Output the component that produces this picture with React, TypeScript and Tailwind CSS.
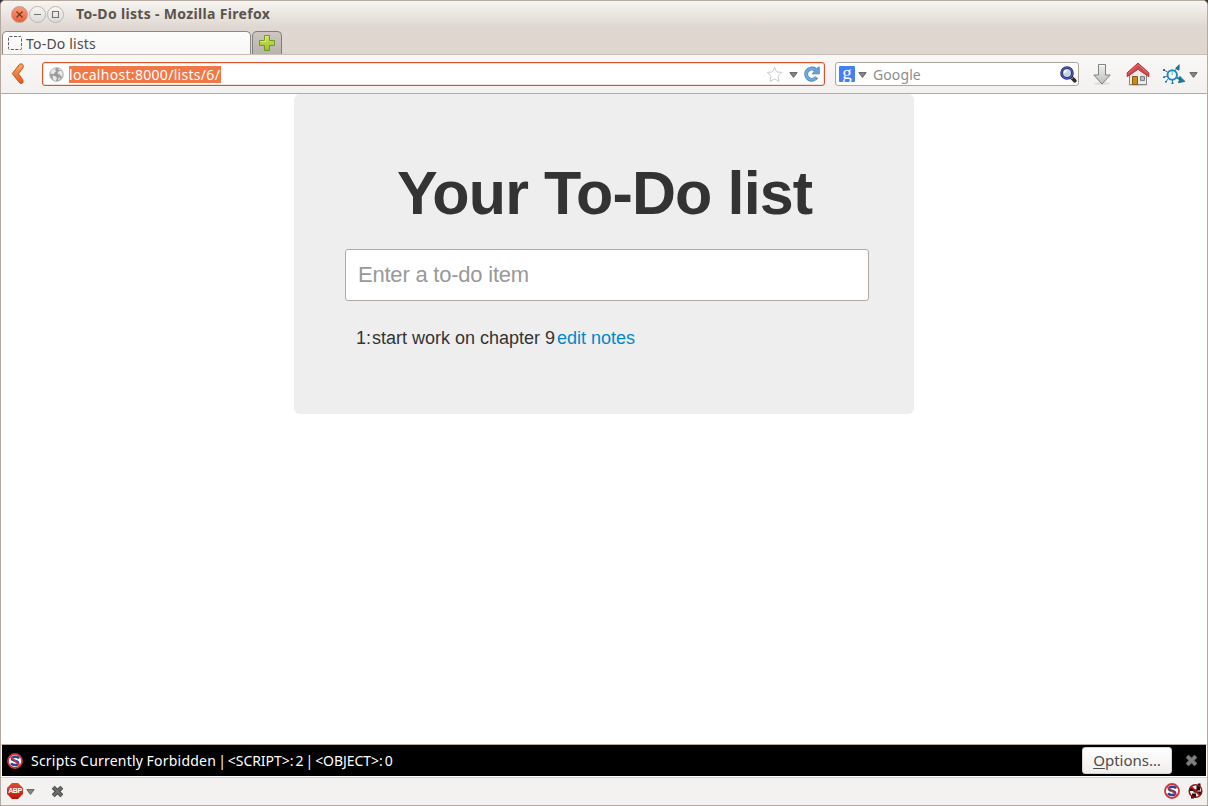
import React from 'react';

const Caret = ({ className = '' }: { className?: string }) => (
  <svg className={`shrink-0 ${className}`} width="9" height="6" viewBox="0 0 9 6">
    <path d="M.8.6h7.4L4.5 5.4z" fill="#858585" stroke="#5b5b5b" strokeWidth=".9" />
  </svg>
);

const WindowButton = ({ close = false, children }: { close?: boolean; children: React.ReactNode }) => (
  <button
    className={`flex size-[17px] items-center justify-center rounded-full border ${
      close ? 'border-[#c9968a] bg-linear-to-b from-[#f79a78] to-[#ea6036]' : 'border-[#bdb6ae] bg-linear-to-b from-[#f8f7f5] to-[#dedad6]'
    }`}
  >
    <svg width="15" height="15" viewBox="0 0 15 15" fill="none" stroke={close ? '#6b3526' : '#77716b'} strokeWidth="1.1">
      {children}
    </svg>
  </button>
);

const Plus = () => (
  <svg width="18" height="18" viewBox="0 0 18 18">
    <defs>
      <linearGradient id="plus" x2="0" y2="1">
        <stop stopColor="#d3e45c" />
        <stop offset="1" stopColor="#9cbf28" />
      </linearGradient>
    </defs>
    <path d="M6.5 1.5h5v5h5v5h-5v5h-5v-5h-5v-5h5z" fill="url(#plus)" stroke="#6c9b28" strokeLinejoin="round" />
    <path d="M7.5 2.5h3M2.5 7.5h5v-5" fill="none" stroke="#e5ef96" strokeWidth=".8" />
  </svg>
);

const Back = () => (
  <svg width="14" height="22" viewBox="0 0 14 22">
    <defs>
      <linearGradient id="back" x2="0" y2="1">
        <stop stopColor="#f5ad6a" />
        <stop offset="1" stopColor="#e5571b" />
      </linearGradient>
    </defs>
    <path d="M8.4 1.4 1.3 10.6l7.4 9.3c.6.8 2.800.8 3.200-.2.3-.9.3-2.300-.2-3L7.400 10.700l4.500-5.600c.5-.9.5-2.300.1-3.300-.6-1-2.900-1.300-3.600-.4z" fill="url(#back)" stroke="#c4501b" />
  </svg>
);

const Globe = () => (
  <svg className="shrink-0" width="15" height="15" viewBox="0 0 15 15">
    <circle cx="7.5" cy="7.5" r="6.800" fill="#9c9c9c" stroke="#b5b5b5" />
    <path d="M2 4.500C3 2.500 5 1.300 6.800 1.300L6 3.200 7.500 4 5.600 5.600 5 7.200 3 6.500 1.500 7.500zM8.800 5.200l2-1.700 1.600.3 1.300 2.400-.2 3.300-1.400.3-1-2.200-2-.4zM3.500 8.500l3 .8 1.500 1.800-1.300 2.900-2.600-1.400zM9.800 1.500l2 1.100-1.300.5-1.300-.6zM10 10.500l1.600.3-1.500 2.200-1.300-.2z" fill="#e9e9e9" />
  </svg>
);

const Star = () => (
  <svg className="shrink-0" width="17" height="17" viewBox="0 0 17 17">
    <path d="m8.500 1.300 2 4.600 5.300.500-3.800 3.800 1 5.300-4.500-2.600L4 15.500l1-5.300L1.200 6.400l5.300-.500z" fill="#fff" stroke="#cacaca" strokeLinejoin="round" />
  </svg>
);

const Reload = () => (
  <svg className="shrink-0" width="16" height="16" viewBox="0 0 16 16">
    <path d="M12.600 11.300A5.700 5.700 0 1 1 11.200 3.500" fill="none" stroke="#4b84bc" strokeWidth="3.800" />
    <path d="m15.200.8.1 7H8.200l2-2.200-1-1 3.200-2z" fill="#6ba3d6" stroke="#4b84bc" strokeWidth=".9" strokeLinejoin="round" />
    <path d="M12.300 11.100A5.500 5.500 0 1 1 11 3.700" fill="none" stroke="#72a9da" strokeWidth="2.400" />
  </svg>
);

const Magnifier = () => (
  <svg className="shrink-0" width="17" height="17" viewBox="0 0 17 17">
    <path d="m11.500 11.500 3.300 3.300" stroke="#2b2b30" strokeWidth="3.700" strokeLinecap="round" />
    <path d="m11 11 1.500 1.500" stroke="#d6b36a" strokeWidth="1.500" />
    <circle cx="7" cy="7" r="5.400" fill="#c9d3e8" stroke="#252d70" strokeWidth="2.800" />
    <circle cx="7" cy="7" r="5.400" fill="none" stroke="#5260b3" strokeWidth="1.100" />
    <path d="M4.500 7C4.500 5.500 5.500 4.500 7 4.500" fill="none" stroke="#fff" strokeWidth="1.700" />
  </svg>
);

const Download = () => (
  <svg width="20" height="24" viewBox="0 0 20 24">
    <defs>
      <linearGradient id="down" x2="0" y2="1">
        <stop stopColor="#eeefed" />
        <stop offset="1" stopColor="#bcbfba" />
      </linearGradient>
    </defs>
    <ellipse cx="10" cy="21.500" rx="8" ry="1.500" fill="#dfddda" />
    <path d="M6.500 2.500h7v10.500h4.700L10 22 1.800 13h4.700z" fill="url(#down)" stroke="#7f827e" strokeLinejoin="round" />
    <path d="M7.500 3.500h5" stroke="#fff" />
  </svg>
);

const Home = () => (
  <svg width="24" height="25" viewBox="0 0 24 25">
    <ellipse cx="12" cy="23" rx="10.500" ry="1.200" fill="#cfccc9" />
    <path d="M3.500 11 12 4l8.500 7v11.500h-17z" fill="#ecebe7" stroke="#868580" />
    <path d="M6.500 14.500h5v8h-5z" fill="#c88a1a" stroke="#8d5b08" />
    <path d="M14.500 14.500h4v4h-4z" fill="#a9bdcc" stroke="#7c8082" />
    <path d="m12 1.100 10.800 9.700v3.900L12 7.300 1.200 14.700v-3.900z" fill="#cf4a50" stroke="#b0343a" strokeLinejoin="round" />
    <path d="m2.300 11.300 9.700-8.700 9.700 8.700" fill="none" stroke="#df797c" strokeWidth=".9" />
  </svg>
);

const Virus = () => (
  <svg width="24" height="21" viewBox="0 0 24 21">
    <g fill="none" stroke="#3a7b95">
      <path d="m2 6 5 3M6 12l-4 1M7 14l-3 3.500M10.500 16v3M13 7l2.500-4" />
    </g>
    <path d="m14 13 4 2.500" stroke="#167ba5" strokeWidth="2" />
    <path d="m13.600 4.300 3.600-3.600-.2 5.500zM22.900 17.400l-6.500 1.300 1-2.500.3-4z" fill="#127ca9" stroke="#1d6280" strokeWidth=".8" />
    <path d="M1 5h2v2H1zM1 12.500h2V14H1zM3 17h2v1.500H3zM9.500 18.500h2V20h-2z" fill="#27708d" />
    <circle cx="10.200" cy="11" r="4.700" fill="#fff" stroke="#1c8dbb" strokeWidth="2" />
    <path d="M10.200 7v4" stroke="#4aa3c8" strokeWidth=".9" />
  </svg>
);

const NoScript = () => (
  <svg className="shrink-0" width="16" height="16" viewBox="0 0 16 16">
    <circle cx="8" cy="8" r="7" fill="#fff" stroke="#d4323a" strokeWidth="1.800" />
    <path d="M12 5.400C11 3.200 5.500 3.100 4.900 5.700 4.800 8.200 11.100 7.300 11.200 10c0 2.900-5.700 2.600-7.200.3" fill="none" stroke="#244a96" strokeWidth="2.500" />
    <path d="m3 3.200 10 9.600" stroke="#dd3038" strokeWidth="1.500" />
  </svg>
);

const Abp = () => (
  <div className="flex size-4 shrink-0 items-center justify-center bg-linear-to-b from-[#dc4b35] to-[#bd0f07] [clip-path:polygon(31%_0,69%_0,100%_31%,100%_69%,69%_100%,31%_100%,0_69%,0_31%)]">
    <span className="font-['Liberation_Sans_Narrow','Liberation_Sans',sans-serif] text-[7px] leading-[14px] font-bold tracking-[-0.4px] text-white">ABP</span>
  </div>
);

const Cross = ({ dark = false }: { dark?: boolean }) => (
  <svg className="shrink-0" width="13" height="13" viewBox="0 0 13 13">
    <path d="m2.200 2.200 8.600 8.600m0-8.600-8.600 8.600" stroke={dark ? '#464846' : '#6e6e6e'} strokeWidth="4.200" />
    <path d="m2.200 2.200 8.600 8.600m0-8.600-8.600 8.600" stroke={dark ? '#6c6e6b' : '#808080'} strokeWidth="2.200" />
  </svg>
);

const Blocked = () => (
  <svg width="15" height="16" viewBox="0 0 15 16">
    <path d="M2 5h3.500v3H2zM4 10.500h4V15H4zM8.500 3H12v4.500H8.500zM10 8.500h3v3h-3zM5.500 6.500h4v3h-4z" fill="#1d0b0b" />
    <path d="M10 .5h2.500V4H10zM3 12h3v3.500H3z" fill="#2b0b0c" />
    <circle cx="7.500" cy="8" r="6.300" fill="none" stroke="#8f1519" strokeWidth="1.500" />
    <path d="m3 3.500 9 9" stroke="#b5171d" strokeWidth="1.800" />
  </svg>
);

export default function App() {
  return (
    <div className="h-[806px] w-[1208px] overflow-hidden bg-[#3b3632] font-['Noto_Sans',sans-serif]">
      <div className="flex h-full flex-col overflow-hidden rounded-t-[5px] border border-[#b5aaa0] bg-white">
        <header className="flex h-[53px] shrink-0 flex-col bg-linear-to-b from-[#f7f5f2] via-[#dfd7d1] via-50% to-[#dfd6d0]">
          <div className="flex h-[30px] shrink-0 items-center pb-[4px] pl-[10px]">
            <div className="flex gap-px">
              <WindowButton close><path d="m4.500 4.500 6 6m0-6-6 6" /></WindowButton>
              <WindowButton><path d="M4 7.500h7" /></WindowButton>
              <WindowButton><path d="M4.500 4.500h6v6h-6z" /></WindowButton>
            </div>
            <div className="ml-[12px] pb-[2px] text-[14px] font-bold tracking-[0.33px] whitespace-nowrap text-[#5c544c]">To-Do lists - Mozilla Firefox</div>
          </div>
          <div className="flex h-[23px] shrink-0 gap-px pl-px">
            <div className="flex w-[249px] items-center rounded-t-[5px] border border-b-0 border-[#8e8883] bg-linear-to-b from-[#fcfcfb] to-[#f8f7f6] pl-[5px]">
              <svg width="14" height="14" viewBox="0 0 14 14"><rect x=".5" y=".5" width="13" height="13" rx="1" fill="none" stroke="#5d5d5d" strokeDasharray="3 1.500" /></svg>
              <span className="ml-[4px] pt-px text-[14px] tracking-[0.2px] text-[#4c4c4c]">To-Do lists</span>
            </div>
            <div className="flex w-[30px] items-center justify-center rounded-t-[5px] border border-b-0 border-[#827d79] bg-linear-to-b from-[#cdc6c1] to-[#b9b2ad]"><Plus /></div>
          </div>
        </header>

        <nav className="flex h-10 shrink-0 items-center border-y border-t-[#c8bfb7] border-b-[#b4aaa1] bg-linear-to-b from-[#f9f8f7] to-[#f3f1ef] pl-[10px]">
          <Back />
          <div className="ml-[17px] flex h-[24px] w-[783px] items-center rounded-[3px] border border-[#d4542c] bg-white pl-[6px] shadow-[inset_0_0_0_1px_#f5dfd7]">
            <Globe />
            <span className="ml-[5px] h-[17px] w-[152px] bg-[#f07746] text-[14px] leading-[17px] tracking-[0.3px] whitespace-nowrap text-white">localhost:8000/lists/6/</span>
            <div className="ml-auto flex items-center pr-[4px]"><Star /><Caret className="mr-[6px] ml-[6px] translate-y-px" /><Reload /></div>
          </div>
          <div className="ml-[10px] flex h-[24px] w-[244px] items-center rounded-[3px] border border-[#aea59d] bg-white pl-[3px]">
            <div className="flex size-4 items-center justify-center rounded-[1px] bg-[#4380f5] pb-[4px] font-['Liberation_Serif',serif] text-[19px] leading-none text-white">g</div>
            <Caret className="ml-[3px] translate-y-px" />
            <span className="ml-[6px] text-[14px] tracking-[0.1px] text-[#8d8d8d]">Google</span>
            <div className="mr-[1px] ml-auto"><Magnifier /></div>
          </div>
          <div className="ml-[13px]"><Download /></div>
          <div className="ml-[14px]"><Home /></div>
          <div className="ml-[12px]"><Virus /></div>
          <Caret className="ml-[3px] translate-y-px" />
        </nav>

        <main className="min-h-0 flex-1 bg-white font-['Liberation_Sans',sans-serif]">
          <section className="ml-[293px] h-[320px] w-[620px] rounded-[6px] bg-[#eee] pt-[69px] pl-[51px] text-[#333]">
            <h1 className="ml-[52px] h-[60px] text-[61px] leading-[60px] font-bold tracking-[-0.85px] whitespace-nowrap">Your To-Do list</h1>
            <input
              className="mt-[26px] block h-[52px] w-[524px] rounded-[3px] border border-[#b4a99f] bg-white px-[12px] text-[22px] tracking-[-0.22px] placeholder:text-[#999]"
              placeholder="Enter a to-do item"
            />
            <div className="mt-[27px] ml-[11px] flex text-[18px] leading-5 whitespace-nowrap text-[#333]">
              <span className="w-[16px]">1:</span>
              <span className="w-[185px]">start work on chapter 9</span>
              <a className="text-[#0088cc]">edit notes</a>
            </div>
          </section>
        </main>

        <div className="flex h-[33px] shrink-0 items-center border border-x-white border-t-[#b5aaa0] border-b-white bg-black pl-[5px] text-[14px] text-white">
          <NoScript />
          <span className="ml-[8px] whitespace-nowrap">
            <span className="tracking-[0.22px] [word-spacing:-0.5px]">Scripts Currently Forbidden</span>
            <span className="tracking-[-0.06px] [word-spacing:-1.5px]"> | &lt;SCRIPT&gt;: 2 | &lt;OBJECT&gt;: 0</span>
          </span>
          <button className="ml-auto h-[27px] w-[90px] rounded-[3px] border border-[#d9d3cc] bg-linear-to-b from-white to-[#f0eeec] text-[15px] text-[#4c4c4c]"><span className="underline underline-offset-2">O</span>ptions…</button>
          <div className="mr-[8px] ml-[13px]"><Cross /></div>
        </div>
        <footer className="flex h-[28px] shrink-0 items-center border-t border-[#d2cfcc] bg-[#f3f2f1] pb-px pl-[6px]">
          <Abp />
          <Caret className="ml-[3px] translate-y-px" />
          <div className="ml-[16px]"><Cross dark /></div>
          <div className="ml-auto"><NoScript /></div>
          <div className="mr-[4px] ml-[8px]"><Blocked /></div>
        </footer>
      </div>
    </div>
  );
}
